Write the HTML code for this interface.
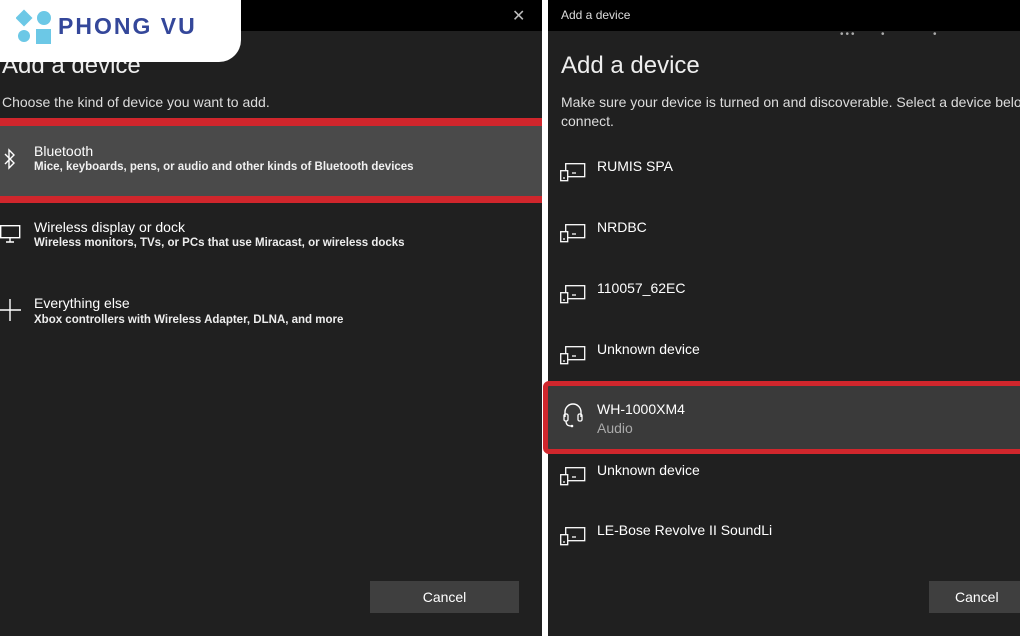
<!DOCTYPE html>
<html><head><meta charset="utf-8"><style>
*{margin:0;padding:0;box-sizing:border-box}
body{width:1020px;height:636px;overflow:hidden;background:#fff;font-family:"Liberation Sans",sans-serif;position:relative;color:#fff}
.p{position:absolute;top:0;height:636px;background:#202020;overflow:hidden}
.tb{position:absolute;left:0;top:0;right:0;height:31px;background:#000}
.a{position:absolute;white-space:nowrap}
.t{font-size:14px;color:#fff}
.s{font-size:11.5px;color:#fff;font-weight:bold;opacity:.92}
.btn{position:absolute;background:#3f3f3f;color:#fff;font-size:14px;text-align:center;line-height:32px;height:32px}
</style></head><body>
<div class="p" style="left:0;width:542px">
 <div class="tb"></div>
 <div class="a" style="left:512px;top:6px;font-size:16px;color:#bbb">✕</div>
 <div class="a" style="left:2px;top:52px;font-size:24px;color:#eee">Add a device</div>
 <div class="a t" style="left:2px;top:94px;color:#ddd">Choose the kind of device you want to add.</div>
 <div class="a" style="left:0;top:118px;width:542px;height:8px;background:#d0262c"></div>
 <div class="a" style="left:0;top:126px;width:542px;height:70px;background:#4a4a4a"></div>
 <div class="a" style="left:0;top:196px;width:542px;height:7px;background:#d0262c"></div>
 <svg class="a" style="left:3px;top:148px" width="14" height="22" viewBox="0 0 14 22"><path d="M2 6 L11 15 L6 20 V2 L11 7 L2 16" fill="none" stroke="#fff" stroke-width="1.4"/></svg>
 <div class="a t" style="left:34px;top:143px">Bluetooth</div>
 <div class="a s" style="left:34px;top:161px">Mice, keyboards, pens, or audio and other kinds of Bluetooth devices</div>
 <svg class="a" style="left:0;top:224px" width="22" height="20" viewBox="0 0 22 20"><rect x="0.7" y="1.7" width="19" height="12" fill="none" stroke="#fff" stroke-width="1.4"/><path d="M6 18H14M10 14V18" stroke="#fff" stroke-width="1.4"/></svg>
 <div class="a t" style="left:34px;top:219px">Wireless display or dock</div>
 <div class="a s" style="left:34px;top:237px">Wireless monitors, TVs, or PCs that use Miracast, or wireless docks</div>
 <svg class="a" style="left:0;top:299px" width="22" height="22" viewBox="0 0 22 22"><path d="M10 0V22M0 11H21" stroke="#fff" stroke-width="1.4"/></svg>
 <div class="a t" style="left:34px;top:295px">Everything else</div>
 <div class="a s" style="left:34px;top:314px">Xbox controllers with Wireless Adapter, DLNA, and more</div>
 <div class="btn" style="left:370px;top:581px;width:149px">Cancel</div>
</div>
<div class="a" style="left:0;top:0;width:241px;height:62px;background:#fff;border-radius:0 0 22px 0"></div>
<svg class="a" style="left:16px;top:9px" width="38" height="36" viewBox="0 0 38 36"><rect x="2" y="3" width="12" height="12" transform="rotate(45 8 9)" fill="#6cc8e6"/><circle cx="28" cy="9" r="7" fill="#6cc8e6"/><circle cx="8" cy="27" r="6" fill="#6cc8e6"/><rect x="20" y="20" width="15" height="15" fill="#6cc8e6"/></svg>
<div class="a" style="left:58px;top:13px;font-size:23px;font-weight:bold;color:#34479a;letter-spacing:2px">PHONG VU</div>

<div class="p" style="left:548px;width:472px">
 <div class="tb"></div>
 <div class="a" style="left:13px;top:8px;font-size:12px;color:#ddd">Add a device</div>
 <div class="a" style="left:292px;top:29px;color:#aaa;font-size:10px;letter-spacing:2px">•••</div>
 <div class="a" style="left:333px;top:29px;color:#aaa;font-size:10px">•</div>
 <div class="a" style="left:385px;top:29px;color:#aaa;font-size:10px">•</div>
 <div class="a" style="left:13px;top:52px;font-size:24px;color:#eee">Add a device</div>
 <div class="a t" style="left:13px;top:94px;color:#ddd">Make sure your device is turned on and discoverable. Select a device below to</div>
 <div class="a t" style="left:13px;top:113px;color:#ddd">connect.</div>
 <div id="list"></div>
 <div class="btn" style="left:381px;top:581px;width:120px;text-align:left;padding-left:26px">Cancel</div>
</div>
<div class="a" style="left:543px;top:381px;width:490px;height:73px;border:5px solid #d0262c;border-radius:6px;background:#3a3a3a"></div>
<svg class="a" style="left:562px;top:402px" width="22" height="26" viewBox="0 0 22 26"><path d="M3 15V10a8 8 0 0 1 16 0v5" fill="none" stroke="#fff" stroke-width="1.4"/><rect x="2" y="12" width="4" height="7" rx="1.5" fill="none" stroke="#fff" stroke-width="1.3"/><rect x="16" y="12" width="4" height="7" rx="1.5" fill="none" stroke="#fff" stroke-width="1.3"/><path d="M4 19q0 5 5 5" fill="none" stroke="#fff" stroke-width="1.3"/><circle cx="10" cy="24" r="1.3" fill="#fff"/></svg>
<div class="a t" style="left:597px;top:401px">WH-1000XM4</div>
<div class="a t" style="left:597px;top:420px;color:#aaa">Audio</div>
<script>
var items=[["RUMIS SPA",158],["NRDBC",219],["110057_62EC",280],["Unknown device",341],["Unknown device",462],["LE-Bose Revolve II SoundLi",522]];
var h="";
items.forEach(function(it){var y=it[1];
h+='<svg class="a" style="left:12px;top:'+(y+4)+'px" width="26" height="20" viewBox="0 0 26 20"><rect x="5.7" y="1.7" width="19" height="13" fill="none" stroke="#fff" stroke-width="1.3"/><rect x="0.7" y="8.7" width="7" height="10" fill="#202020" stroke="#fff" stroke-width="1.3"/><path d="M3 16h2M12 11h4" stroke="#fff" stroke-width="1.3"/></svg>';
h+='<div class="a t" style="left:49px;top:'+y+'px">'+it[0]+'</div>';});
document.getElementById("list").outerHTML=h;
</script>
</body></html>
